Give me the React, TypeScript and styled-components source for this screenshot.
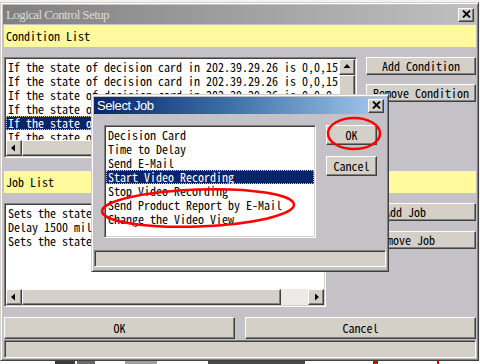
import React from "react";
import styled, { createGlobalStyle, css } from "styled-components";

const FACE = "#d4d0c8";
const WIN = "#c4c2c6";
const MONO = `"Noto Sans Mono CJK TC","Noto Sans Mono CJK SC","Liberation Mono",monospace`;

const Global = createGlobalStyle`
  html, body { margin: 0; padding: 0; background: #f2f2f2; }
  body { width: 480px; height: 364px; overflow: hidden; font-family: ${MONO}; }
  * { box-sizing: border-box; }
`;

const raised = css`
  background: ${FACE};
  border: 1px solid;
  border-color: #ffffff #404040 #404040 #ffffff;
  box-shadow: inset -1px -1px 0 #808080;
`;

const sunken = css`
  border: 1px solid;
  border-color: #808080 #ffffff #ffffff #808080;
  box-shadow: inset 1px 1px 0 #404040, inset -1px -1px 0 ${FACE};
`;

const Stage = styled.div`
  position: relative;
  width: 480px;
  height: 364px;
  padding-top: 2px;
  background: #f2f2f2;
`;

const Window = styled.div`
  width: 479px;
  height: 359px;
  background: ${WIN};
  border: 1px solid;
  border-color: ${FACE} #404040 #404040 ${FACE};
  box-shadow: inset 1px 1px 0 #ffffff, inset -1px -1px 0 #808080;
  padding: 2px;
  display: flex;
  flex-direction: column;
`;

const TitleBar = styled.div<{ $active?: boolean; $h: number }>`
  height: ${(p) => p.$h}px;
  flex: none;
  display: flex;
  align-items: center;
  justify-content: space-between;
  padding: 0 2px 0 3px;
  background: ${(p) =>
    p.$active
      ? "linear-gradient(90deg, #0a246a 0%, #3a6ea5 45%, #a6caf0 100%)"
      : "linear-gradient(90deg, #808080 0%, #a0a0a0 50%, #c0c0c0 100%)"};
`;

const MainTitle = styled.span`
  font-family: "Liberation Serif", serif;
  font-size: 13px;
  letter-spacing: -0.6px;
  color: #dcdad6;
`;

const DialogTitle = styled.span`
  font-family: "Liberation Sans Narrow", "Liberation Sans", sans-serif;
  font-size: 13px;
  letter-spacing: -0.4px;
  color: #ffffff;
`;

const CloseBtn = styled.div`
  ${raised};
  width: 16px;
  height: 14px;
  display: flex;
  align-items: center;
  justify-content: center;
  padding-bottom: 1px;
`;

const Body = styled.div`
  flex: 1;
  display: flex;
  flex-direction: column;
  padding: 1px 0 0 1px;
`;

const Band = styled.div<{ $mt: number }>`
  height: 22px;
  flex: none;
  margin-top: ${(p) => p.$mt}px;
  background: #fffa9e;
  font-size: 12px;
  line-height: 22px;
  padding-left: 2px;
  color: #000;
`;

const Row = styled.div<{ $mt: number; $h: number }>`
  margin-top: ${(p) => p.$mt}px;
  height: ${(p) => p.$h}px;
  flex: none;
  display: flex;
  justify-content: space-between;
  align-items: flex-start;
`;

const SideButtons = styled.div<{ $gap: number; $w: number }>`
  width: ${(p) => p.$w}px;
  display: flex;
  flex-direction: column;
  gap: ${(p) => p.$gap}px;
`;

const Button = styled.div<{ $w?: number; $h: number }>`
  ${raised};
  width: ${(p) => (p.$w ? `${p.$w}px` : "100%")};
  height: ${(p) => p.$h}px;
  display: flex;
  align-items: center;
  justify-content: center;
  font-size: 12px;
  color: #000;
  white-space: nowrap;
  padding-bottom: 1px;
`;

const ListFrame = styled.div<{ $w: number; $h: number }>`
  ${sunken};
  width: ${(p) => p.$w}px;
  height: ${(p) => p.$h}px;
  padding: 1px;
  background: #ffffff;
  display: flex;
  flex-direction: column;
  overflow: hidden;
`;

const ListMain = styled.div`
  flex: 1;
  display: flex;
  min-height: 0;
`;

const Items = styled.div`
  flex: 1;
  overflow: hidden;
  padding-top: 1px;
`;

const Item = styled.div<{ $sel?: boolean }>`
  height: 14px;
  line-height: 14px;
  font-size: 12px;
  white-space: nowrap;
  padding-left: 2px;
  color: ${(p) => (p.$sel ? "#ffffff" : "#000000")};
  background: ${(p) => (p.$sel ? "#0a246a" : "transparent")};
  outline: ${(p) => (p.$sel ? "1px dotted #d8c890" : "none")};
  outline-offset: -1px;
`;

const VScroll = styled.div`
  width: 16px;
  display: flex;
  flex-direction: column;
  background: #ece9e6;
`;

const HScroll = styled.div`
  height: 16px;
  flex: none;
  display: flex;
  background: #ece9e6;
`;

const ArrowBtn = styled.div`
  ${raised};
  width: 16px;
  height: 16px;
  flex: none;
  display: flex;
  align-items: center;
  justify-content: center;
`;

const Thumb = styled.div<{ $w?: number; $h?: number }>`
  ${raised};
  flex: none;
  width: ${(p) => (p.$w ? `${p.$w}px` : "16px")};
  height: ${(p) => (p.$h ? `${p.$h}px` : "16px")};
`;

const Track = styled.div`
  flex: 1;
`;

const ButtonRow = styled.div`
  margin-top: 10px;
  height: 22px;
  flex: none;
  display: flex;
  gap: 10px;
`;

const StatusBox = styled.div<{ $w: number; $h: number; $mt: number }>`
  ${sunken};
  background: ${FACE};
  margin-top: ${(p) => p.$mt}px;
  width: ${(p) => p.$w}px;
  height: ${(p) => p.$h}px;
  flex: none;
`;

const Desk = styled.div`
  height: 3px;
  display: flex;
  background: #ffffff;
`;

const DeskBlock = styled.div<{ $ml: number; $w: number; $c: string }>`
  margin-left: ${(p) => p.$ml}px;
  width: ${(p) => p.$w}px;
  height: 3px;
  background: ${(p) => p.$c};
`;

const Dialog = styled.div`
  position: absolute;
  left: 91px;
  top: 94px;
  width: 298px;
  height: 178px;
  background: ${WIN};
  border: 1px solid;
  border-color: ${FACE} #404040 #404040 ${FACE};
  box-shadow: inset 1px 1px 0 #ffffff, inset -1px -1px 0 #808080;
  padding: 2px;
  display: flex;
  flex-direction: column;
`;

const DialogMain = styled.div`
  display: flex;
  gap: 10px;
  padding-left: 10px;
  margin-top: 11px;
`;

const DialogButtons = styled.div`
  display: flex;
  flex-direction: column;
  gap: 11px;
`;

const Marks = styled.svg`
  position: absolute;
  left: 0;
  top: 0;
  pointer-events: none;
`;

const XIcon = () => (
  <svg width="9" height="8" viewBox="0 0 9 8">
    <path d="M1 0.5 L8 7.5 M8 0.5 L1 7.5" stroke="#000" strokeWidth="1.8" />
  </svg>
);

const Tri = ({ dir }: { dir: "up" | "left" | "right" }) => {
  const d =
    dir === "up" ? "M0.5 5 L4 1 L7.5 5 Z" : dir === "left" ? "M5 0.5 L1 4 L5 7.5 Z" : "M3 0.5 L7 4 L3 7.5 Z";
  return (
    <svg width="8" height="8" viewBox="0 0 8 8">
      <path d={d} fill="#000" />
    </svg>
  );
};

const conditions = [
  "If the state of decision card in 202.39.29.26 is 0,0,15",
  "If the state of decision card in 202.39.29.26 is 0,0,15",
  "If the state of decision card in 202.39.29.26 is 0,0,0",
  "If the state of decision card in 202.39.29.26 is 0,0,15",
  "If the state of decision card in 202.39.29.26 is 0,15,0",
  "If the state of decision card in 202.39.29.26 is 0,0,0",
];

const jobs = [
  "Sets the state of decision card in 202.39.29.26 to 0,0,15",
  "Delay 1500 millisecond",
  "Sets the state of decision card in 202.39.29.26 to 0,0,0",
];

const choices = [
  "Decision Card",
  "Time to Delay",
  "Send E-Mail",
  "Start Video Recording",
  "Stop Video Recording",
  "Send Product Report by E-Mail",
  "Change the Video View",
];

export default function App() {
  return (
    <>
      <Global />
      <Stage>
        <Window>
          <TitleBar $h={19}>
            <MainTitle>Logical Control Setup</MainTitle>
            <CloseBtn>
              <XIcon />
            </CloseBtn>
          </TitleBar>
          <Body>
            <Band $mt={0}>Condition List</Band>
            <Row $mt={10} $h={101}>
              <ListFrame $w={353} $h={101}>
                <ListMain>
                  <Items>
                    {conditions.map((c, i) => (
                      <Item key={i} $sel={i === 4}>
                        {c}
                      </Item>
                    ))}
                  </Items>
                  <VScroll>
                    <ArrowBtn>
                      <Tri dir="up" />
                    </ArrowBtn>
                    <Thumb $h={30} />
                    <Track />
                  </VScroll>
                </ListMain>
                <HScroll>
                  <ArrowBtn>
                    <Tri dir="left" />
                  </ArrowBtn>
                  <Thumb $w={240} />
                  <Track />
                </HScroll>
              </ListFrame>
              <SideButtons $gap={9} $w={110}>
                <Button $h={18}>Add Condition</Button>
                <Button $h={18}>Remove Condition</Button>
              </SideButtons>
            </Row>
            <Band $mt={13}>Job List</Band>
            <Row $mt={10} $h={104}>
              <ListFrame $w={322} $h={104}>
                <ListMain>
                  <Items>
                    {jobs.map((j, i) => (
                      <Item key={i}>{j}</Item>
                    ))}
                  </Items>
                </ListMain>
                <HScroll>
                  <ArrowBtn>
                    <Tri dir="left" />
                  </ArrowBtn>
                  <Thumb $w={259} />
                  <Track />
                  <ArrowBtn>
                    <Tri dir="right" />
                  </ArrowBtn>
                </HScroll>
              </ListFrame>
              <SideButtons $gap={10} $w={142}>
                <Button $h={18}>Add Job</Button>
                <Button $h={18}>Remove Job</Button>
              </SideButtons>
            </Row>
            <ButtonRow>
              <Button $w={231} $h={22}>
                OK
              </Button>
              <Button $w={231} $h={22}>
                Cancel
              </Button>
            </ButtonRow>
            <StatusBox $w={472} $h={18} $mt={1} />
          </Body>
        </Window>
        <Desk>
          <DeskBlock $ml={55} $w={20} $c="#3c3c3c" />
          <DeskBlock $ml={2} $w={18} $c="#6a6a6a" />
          <DeskBlock $ml={30} $w={32} $c="#a0a0a0" />
          <DeskBlock $ml={51} $w={97} $c="#4a4a4a" />
          <DeskBlock $ml={68} $w={5} $c="#e00000" />
          <DeskBlock $ml={59} $w={2} $c="#e00000" />
        </Desk>

        <Dialog>
          <TitleBar $active $h={17}>
            <DialogTitle>Select Job</DialogTitle>
            <CloseBtn>
              <XIcon />
            </CloseBtn>
          </TitleBar>
          <DialogMain>
            <ListFrame $w={212} $h={113}>
              <Items>
                {choices.map((c, i) => (
                  <Item key={i} $sel={i === 3}>
                    {c}
                  </Item>
                ))}
              </Items>
            </ListFrame>
            <DialogButtons>
              <Button $w={51} $h={20}>
                OK
              </Button>
              <Button $w={51} $h={20}>
                Cancel
              </Button>
            </DialogButtons>
          </DialogMain>
          <StatusBox $w={292} $h={17} $mt={12} />
        </Dialog>

        <Marks width="480" height="364" viewBox="0 0 480 364">
          <ellipse cx="354" cy="133.5" rx="26" ry="15.5" fill="none" stroke="#ff0000" strokeWidth="2.5" />
          <ellipse
            cx="198"
            cy="208"
            rx="96"
            ry="18.5"
            fill="none"
            stroke="#ff0000"
            strokeWidth="2.5"
            transform="rotate(-2 198 208)"
          />
        </Marks>
      </Stage>
    </>
  );
}
